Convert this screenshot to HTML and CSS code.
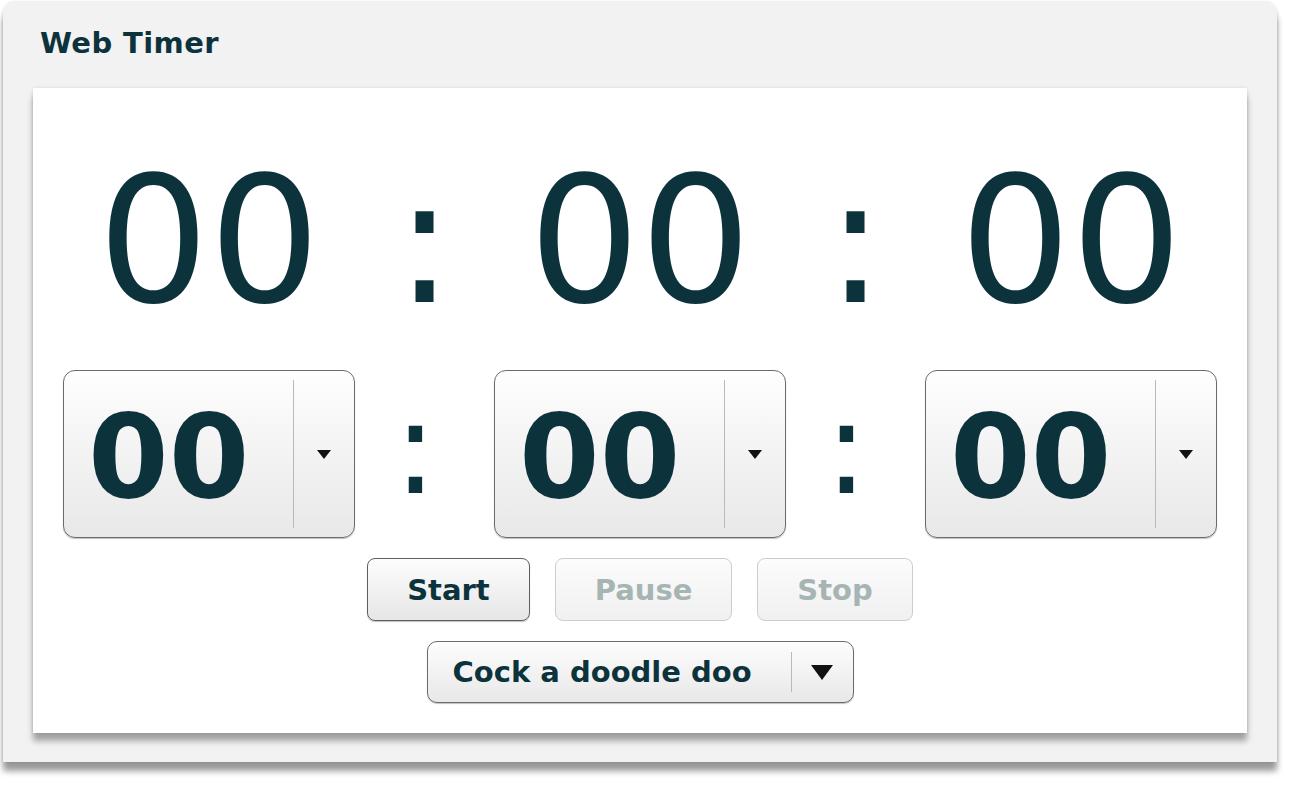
FILE: index.html
```html
<!DOCTYPE html>
<html lang="en">
<head>
    <meta charset="UTF-8">
    <meta name="viewport" content="width=device-width, initial-scale=1.0">
    <title>Web Timer</title>
    <link rel="stylesheet" href="styles.css">
</head>
<body>
    <div class="panel">
        <h1 class="panel-title">Web Timer</h1>

        <div class="timer">
            <div class="clock">
                <span class="clock-part">00</span>
                <span class="clock-sep">:</span>
                <span class="clock-part">00</span>
                <span class="clock-sep">:</span>
                <span class="clock-part">00</span>
            </div>

            <div class="setter">
                <div class="spin">
                    <span class="spin-value">00</span>
                    <span class="spin-arrow"><i class="caret"></i></span>
                </div>
                <span class="setter-sep">:</span>
                <div class="spin">
                    <span class="spin-value">00</span>
                    <span class="spin-arrow"><i class="caret"></i></span>
                </div>
                <span class="setter-sep">:</span>
                <div class="spin">
                    <span class="spin-value">00</span>
                    <span class="spin-arrow"><i class="caret"></i></span>
                </div>
            </div>

            <div class="controls">
                <button class="btn" type="button">Start</button>
                <button class="btn" type="button" disabled>Pause</button>
                <button class="btn" type="button" disabled>Stop</button>
            </div>

            <div class="sound">
                <div class="sound-select">
                    <span class="sound-name">Cock a doodle doo</span>
                    <span class="sound-arrow"><i class="caret caret-big"></i></span>
                </div>
            </div>
        </div>
    </div>
</body>
</html>
```

FILE: styles.css
```css
body {
    margin: 0;
    padding: 0 0 30px;
    background: #fff;
    font-family: "DejaVu Sans", Verdana, sans-serif;
    color: #0c323c;
}

.panel {
    width: 1274px;
    margin: 2px 0 0 3px;
    padding: 0 30px 29px;
    box-sizing: border-box;
    background: #f2f2f2;
    border-radius: 12px 12px 0 0;
    box-shadow: 0 9px 6px rgba(0, 0, 0, 0.4), 0 0 3px rgba(0, 0, 0, 0.15);
}

.panel-title {
    margin: 0;
    height: 86px;
    padding-left: 7px;
    font-size: 29px;
    letter-spacing: 0.4px;
    line-height: 82px;
    font-weight: bold;
}

.timer {
    background: #fff;
    padding: 63px 0 30px;
    box-shadow: 0 8px 6px rgba(0, 0, 0, 0.33), 0 0 3px rgba(0, 0, 0, 0.12);
}

.clock,
.setter {
    display: grid;
    grid-template-columns: 292px 1fr 292px 1fr 292px;
    padding: 0 30px;
}

.clock {
    font-size: 175px;
    line-height: 182px;
    text-align: center;
}

.setter {
    margin-top: 37px;
}

.setter-sep {
    font-size: 130px;
    line-height: 157px;
    text-align: center;
    padding-right: 18px;
}

.spin {
    display: flex;
    height: 168px;
    box-sizing: border-box;
    border: 1px solid #6b6b6b;
    border-radius: 12px;
    background: linear-gradient(#fefefe, #e8e8e8);
    box-shadow: 0 1px 1px rgba(0, 0, 0, 0.25);
}

.spin-value {
    width: 229px;
    box-sizing: border-box;
    padding: 8px 0 0 24px;
    font-size: 116px;
    line-height: 156px;
    font-weight: bold;
}

.spin-arrow,
.sound-arrow {
    flex: 1;
    display: flex;
    align-items: center;
    justify-content: center;
    border-left: 1px solid #b9b9b9;
}

.spin-arrow {
    margin: 9px 0;
}

.caret {
    width: 0;
    height: 0;
    border-left: 7px solid transparent;
    border-right: 7px solid transparent;
    border-top: 9px solid #111;
}

.caret-big {
    border-left-width: 11px;
    border-right-width: 11px;
    border-top-width: 15px;
}

.controls {
    display: flex;
    justify-content: center;
    gap: 25px;
    margin-top: 20px;
}

.btn {
    height: 63px;
    padding: 0 39px;
    border: 1px solid #5f5f5f;
    border-radius: 8px;
    background: linear-gradient(#fdfdfd, #e6e6e6);
    box-shadow: 0 1px 1px rgba(0, 0, 0, 0.25);
    font-family: inherit;
    font-size: 29px;
    font-weight: bold;
    color: #0c323c;
    cursor: pointer;
}

.btn:disabled {
    border-color: #cdcdcd;
    background: linear-gradient(#fcfcfc, #f0f0f0);
    box-shadow: none;
    color: #a7b4b4;
    cursor: default;
}

.sound {
    display: flex;
    justify-content: center;
    margin-top: 20px;
}

.sound-select {
    display: flex;
    width: 427px;
    height: 62px;
    box-sizing: border-box;
    border: 1px solid #6b6b6b;
    border-radius: 10px;
    background: linear-gradient(#fdfdfd, #e8e8e8);
    box-shadow: 0 1px 1px rgba(0, 0, 0, 0.25);
}

.sound-name {
    width: 363px;
    box-sizing: border-box;
    padding-left: 25px;
    font-size: 29px;
    line-height: 60px;
    font-weight: bold;
}

.sound-arrow {
    margin: 10px 0;
}
```
